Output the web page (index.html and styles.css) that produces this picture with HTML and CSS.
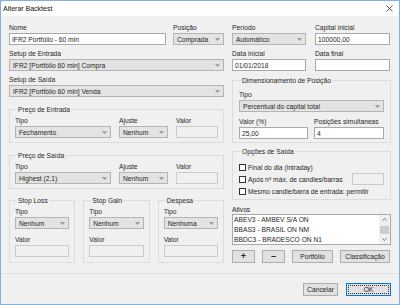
FILE: index.html
```html
<!DOCTYPE html>
<html>
  <head>
    <title>Alterar Backtest</title>
    <link rel="stylesheet" href="styles.css">
  </head>
  <body>
    <div class="window">
      <div class="titlebar">
        <span class="title">Alterar Backtest</span>
        <svg class="close" width="7" height="7" viewBox="0 0 7 7">
          <path d="M0.5 0.5L6.5 6.5M6.5 0.5L0.5 6.5" stroke="#333" stroke-width="0.8" fill="none"/>
        </svg>
      </div>

      <div class="content">
        <div class="col-left">
          <div class="row row-nome">
            <div class="field">
              <label>Nome</label>
              <input class="input" type="text" value="IFR2 Portfólio - 60 min">
            </div>
            <div class="field">
              <label>Posição</label>
              <div class="combo"><span>Comprada</span><i class="chev"></i></div>
            </div>
          </div>
          <div class="field">
            <label>Setup de Entrada</label>
            <div class="combo"><span>IFR2 [Portfólio 60 min] Compra</span><i class="chev"></i></div>
          </div>
          <div class="field">
            <label>Setup de Saída</label>
            <div class="combo"><span>IFR2 [Portfólio 60 min] Venda</span><i class="chev"></i></div>
          </div>

          <fieldset class="group group-preco first">
            <legend>Preço de Entrada</legend>
            <div class="row row-preco">
              <div class="field">
                <label>Tipo</label>
                <div class="combo"><span>Fechamento</span><i class="chev"></i></div>
              </div>
              <div class="field">
                <label>Ajuste</label>
                <div class="combo"><span>Nenhum</span><i class="chev"></i></div>
              </div>
              <div class="field">
                <label>Valor</label>
                <input class="input disabled" type="text" value="" disabled>
              </div>
            </div>
          </fieldset>

          <fieldset class="group group-preco">
            <legend>Preço de Saída</legend>
            <div class="row row-preco">
              <div class="field">
                <label>Tipo</label>
                <div class="combo"><span>Highest (2,1)</span><i class="chev"></i></div>
              </div>
              <div class="field">
                <label>Ajuste</label>
                <div class="combo"><span>Nenhum</span><i class="chev"></i></div>
              </div>
              <div class="field">
                <label>Valor</label>
                <input class="input disabled" type="text" value="" disabled>
              </div>
            </div>
          </fieldset>

          <div class="row row-stops">
            <fieldset class="group group-stop">
              <legend>Stop Loss</legend>
              <div class="field">
                <label>Tipo</label>
                <div class="combo"><span>Nenhum</span><i class="chev"></i></div>
              </div>
              <div class="field">
                <label>Valor</label>
                <input class="input disabled" type="text" value="" disabled>
              </div>
            </fieldset>
            <fieldset class="group group-stop">
              <legend>Stop Gain</legend>
              <div class="field">
                <label>Tipo</label>
                <div class="combo"><span>Nenhum</span><i class="chev"></i></div>
              </div>
              <div class="field">
                <label>Valor</label>
                <input class="input disabled" type="text" value="" disabled>
              </div>
            </fieldset>
            <fieldset class="group group-stop">
              <legend>Despesa</legend>
              <div class="field">
                <label>Tipo</label>
                <div class="combo"><span>Nenhuma</span><i class="chev"></i></div>
              </div>
              <div class="field">
                <label>Valor</label>
                <input class="input disabled" type="text" value="" disabled>
              </div>
            </fieldset>
          </div>
        </div>

        <div class="col-right">
          <div class="row row-half">
            <div class="field">
              <label>Período</label>
              <div class="combo"><span>Automático</span><i class="chev"></i></div>
            </div>
            <div class="field">
              <label>Capital inicial</label>
              <input class="input" type="text" value="100000,00">
            </div>
          </div>
          <div class="row row-half">
            <div class="field">
              <label>Data inicial</label>
              <input class="input" type="text" value="01/01/2018">
            </div>
            <div class="field">
              <label>Data final</label>
              <input class="input" type="text" value="">
            </div>
          </div>

          <fieldset class="group group-dim">
            <legend>Dimensionamento de Posição</legend>
            <div class="field">
              <label>Tipo</label>
              <div class="combo"><span>Percentual do capital total</span><i class="chev"></i></div>
            </div>
            <div class="row row-dim">
              <div class="field">
                <label>Valor (%)</label>
                <input class="input" type="text" value="25,00">
              </div>
              <div class="field">
                <label>Posições simultaneas</label>
                <input class="input" type="text" value="4">
              </div>
            </div>
          </fieldset>

          <fieldset class="group group-opcoes">
            <legend>Opções de Saída</legend>
            <div class="check-row"><span class="check"></span>Final do dia (intraday)</div>
            <div class="check-row"><span class="check"></span>Após nº máx. de candles/barras<input class="input disabled small" type="text" value="" disabled></div>
            <div class="check-row"><span class="check"></span>Mesmo candle/barra de entrada: permitir</div>
          </fieldset>

          <div class="field ativos">
            <label>Ativos</label>
            <div class="listbox">
              <ul class="items">
                <li>ABEV3 - AMBEV S/A ON</li>
                <li>BBAS3 - BRASIL ON NM</li>
                <li>BBDC3 - BRADESCO ON N1</li>
              </ul>
              <div class="scrollbar">
                <svg width="5" height="3" viewBox="0 0 5 3"><path d="M0.5 2.5L2.5 0.5L4.5 2.5" stroke="#555" stroke-width="0.8" fill="none"/></svg>
                <div class="thumb"></div>
                <svg width="5" height="3" viewBox="0 0 5 3"><path d="M0.5 0.5L2.5 2.5L4.5 0.5" stroke="#555" stroke-width="0.8" fill="none"/></svg>
              </div>
            </div>
          </div>

          <div class="list-buttons">
            <button class="btn btn-plus">+</button>
            <button class="btn btn-minus">–</button>
            <button class="btn btn-portfolio">Portfólio</button>
            <button class="btn btn-class">Classificação</button>
          </div>
        </div>
      </div>

      <div class="footer">
        <button class="btn btn-cancel">Cancelar</button>
        <button class="btn btn-ok"><span class="focus">OK</span></button>
      </div>
    </div>
  </body>
</html>
```

FILE: styles.css
```css
* {
  box-sizing: border-box;
}

body {
  margin: 0;
  font-family: "Liberation Sans", Arial, sans-serif;
  font-size: 6.7px;
  color: #262626;
}

.window {
  width: 400px;
  height: 305px;
  background-color: #f0f0f0;
  border: 1px solid #7fb0e0;
  display: flex;
  flex-direction: column;
}

.titlebar {
  height: 15px;
  background-color: #fff;
  display: flex;
  align-items: center;
  justify-content: space-between;
  padding: 0 6px 0 2px;
  flex-shrink: 0;
}

.title {
  font-size: 7px;
  color: #111;
}

.content {
  display: flex;
  gap: 8px;
  padding: 7px 0 0 8px;
  flex: 1;
}

.col-left {
  width: 215px;
  display: flex;
  flex-direction: column;
  gap: 4px;
}

.col-right {
  width: 159px;
  display: flex;
  flex-direction: column;
  gap: 4px;
}

.row {
  display: grid;
  column-gap: 7px;
}

.row-nome {
  grid-template-columns: 157px 51px;
}

.row-half {
  grid-template-columns: 74px 75px;
  column-gap: 9px;
}

.row-preco {
  grid-template-columns: 96px 49px 1fr;
  column-gap: 8px;
}

.row-dim {
  grid-template-columns: 69px 70px;
  column-gap: 6px;
  margin-top: 5px;
}

.row-stops {
  grid-template-columns: repeat(3, 1fr);
  column-gap: 8px;
  margin-top: 3px;
}

.field {
  display: flex;
  flex-direction: column;
}

.field label {
  line-height: 9px;
  height: 9px;
  margin-bottom: 1px;
  white-space: nowrap;
}

.input {
  height: 12px;
  width: 100%;
  margin: 0;
  padding: 0 2px;
  font: inherit;
  color: #262626;
  background-color: #fff;
  border: 1px solid #a9a9a9;
  outline: none;
}

.input.disabled {
  background-color: #f0f0f0;
  border-color: #cbcbcb;
}

.combo {
  height: 12px;
  display: flex;
  align-items: center;
  justify-content: space-between;
  padding: 0 4px 0 3px;
  background-color: #e3e3e3;
  border: 1px solid #b4b4b4;
  white-space: nowrap;
  overflow: hidden;
}

.chev {
  width: 3px;
  height: 3px;
  border-right: 1px solid #777;
  border-bottom: 1px solid #777;
  transform: translateY(-1px) rotate(45deg);
  flex-shrink: 0;
}

.group {
  margin: 0;
  min-width: 0;
  border: 1px solid #dcdcdc;
  padding: 2px 5px 4px;
}

.group legend {
  line-height: 9px;
  padding: 0 1px;
  margin-left: 2px;
  white-space: nowrap;
}

.group-preco {
  margin-top: 4px;
}

.group-stop {
  padding: 2px 5px 5px;
}

.group-stop .field + .field {
  margin-top: 6px;
}

.group-dim {
  margin-top: 1px;
  padding: 5px 6px 3px;
}

.group-opcoes {
  padding: 5px 6px 2px;
}

.check-row {
  height: 12px;
  display: flex;
  align-items: center;
  white-space: nowrap;
}

.check {
  width: 7px;
  height: 7px;
  border: 1px solid #333;
  background-color: #fff;
  margin-right: 2px;
  flex-shrink: 0;
}

.input.small {
  width: 32px;
  margin-left: auto;
}

.ativos {
  margin-top: 1px;
}

.ativos label {
  margin-bottom: 0;
}

.listbox {
  height: 31px;
  display: flex;
  background-color: #fff;
  border: 1px solid #a9a9a9;
}

.items {
  list-style: none;
  margin: 0;
  padding: 0 0 0 1px;
  flex: 1;
}

.items li {
  line-height: 10px;
  white-space: nowrap;
}

.scrollbar {
  width: 11px;
  background-color: #f0f0f0;
  display: flex;
  flex-direction: column;
  align-items: center;
  justify-content: space-between;
  padding: 3px 0;
}

.thumb {
  width: 9px;
  height: 8px;
  background-color: #cdcdcd;
}

.btn {
  height: 13px;
  margin: 0;
  padding: 0;
  font: inherit;
  color: #262626;
  background-color: #e1e1e1;
  border: 1px solid #adadad;
}

.list-buttons {
  display: flex;
  gap: 7px;
  margin-top: 1px;
}

.btn-plus,
.btn-minus {
  width: 23px;
  font-size: 9px;
  font-weight: bold;
  line-height: 9px;
}

.btn-portfolio {
  width: 41px;
}

.btn-class {
  width: 50px;
}

.footer {
  height: 31px;
  border-top: 1px solid #e2e2e2;
  display: flex;
  justify-content: flex-end;
  align-items: flex-start;
  gap: 8px;
  padding: 9px 8px 0 0;
  flex-shrink: 0;
}

.btn-cancel {
  width: 35px;
}

.btn-ok {
  width: 45px;
  border-color: #0078d7;
  padding: 1px;
}

.focus {
  display: flex;
  align-items: center;
  justify-content: center;
  height: 100%;
  border: 1px dotted #333;
}
```
